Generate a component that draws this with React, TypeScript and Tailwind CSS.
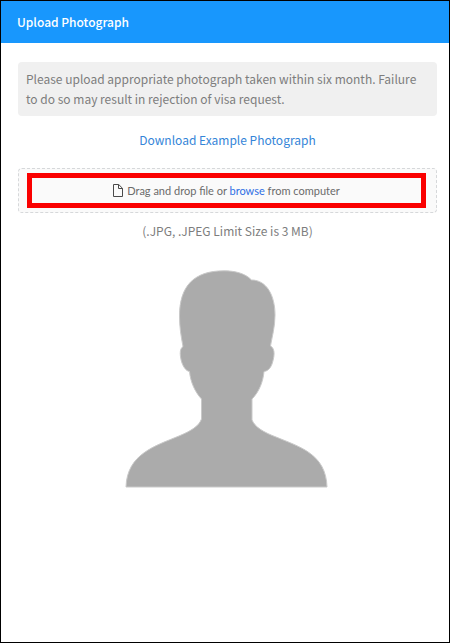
import { useRef, useState } from "react";
import type { ChangeEvent, DragEvent } from "react";

const ACCEPTED_TYPES = ".jpg,.jpeg";

function FileIcon() {
  return (
    <svg
      viewBox="0 0 10 13"
      className="h-[13px] w-[10px] shrink-0"
      fill="none"
      stroke="#4a4a4a"
      aria-hidden="true"
    >
      <path d="M.5.5h5.2l3.8 3.8v8.2h-9z" />
      <path d="M5.5.5v4h4" />
    </svg>
  );
}

function PersonSilhouette() {
  return (
    <svg
      viewBox="0 0 205 219"
      className="h-[219px] w-[205px]"
      fill="#ababab"
      stroke="#c9c9c9"
      role="img"
      aria-label="Photograph placeholder"
    >
      <path d="M99 .8C109 .8 120 3 126.500 10C142 10 150 26 150 45C150 57 147 67 145.500 76C151 79 149 88 147 94C145.500 98 143 101 139 101.500C138 112 134 122 127 129L127 150C130 157 138 162 151 167C175 177 201 184 202 217L1 217C2 184 30 176 54 166C66 161 74 156 76.500 149L76.500 129C70 122 65.500 112 64.500 101.500C61 101 58.500 97 57 93C55 87 54 79 58 76.500C56 66 54.500 57 54.500 46C54.500 16 69 .8 99 .8Z" />
    </svg>
  );
}

function DropZone() {
  const inputRef = useRef<HTMLInputElement>(null);
  const [fileName, setFileName] = useState("");

  const handleChange = (event: ChangeEvent<HTMLInputElement>) => {
    setFileName(event.target.files?.[0]?.name ?? "");
  };

  const handleDrop = (event: DragEvent<HTMLDivElement>) => {
    event.preventDefault();
    setFileName(event.dataTransfer.files[0]?.name ?? "");
  };

  return (
    <div
      className="rounded-sm border border-dashed border-[#d6d8da] bg-[#fafafa] py-1 pr-2.5 pl-2"
      onDragOver={(event) => event.preventDefault()}
      onDrop={handleDrop}
    >
      <div className="flex items-center justify-center gap-1 border-[5px] border-[#fa0000] py-1 font-['Lato',sans-serif] text-[11px] leading-[17px] text-[#6b6b6b]">
        <FileIcon />
        {fileName ? (
          <span>{fileName}</span>
        ) : (
          <p>
            Drag and drop file or{" "}
            <button
              type="button"
              className="cursor-pointer text-[#2f6fe4]"
              onClick={() => inputRef.current?.click()}
            >
              browse
            </button>{" "}
            from computer
          </p>
        )}
        <input
          ref={inputRef}
          type="file"
          accept={ACCEPTED_TYPES}
          aria-label="Photograph"
          className="hidden"
          onChange={handleChange}
        />
      </div>
    </div>
  );
}

export default function App() {
  return (
    <div className="flex min-h-screen flex-col border border-black bg-white font-['Noto_Sans_CJK_SC',sans-serif] text-[12px] leading-5 text-[#7d7d7d]">
      <header className="bg-[#1897fd] px-4 py-[11px]">
        <h1 className="font-medium text-white">Upload Photograph</h1>
      </header>

      <main className="flex flex-col pt-[19px] pr-3 pl-[17px]">
        <p className="rounded bg-[#f0f0f0] px-2 py-[7px]">
          Please upload appropriate photograph taken within six month. Failure
          to do so may result in rejection of visa request.
        </p>
        <a
          href="#example"
          className="mt-3.5 mb-[18px] self-center text-[#3585d8]"
        >
          Download Example Photograph
        </a>
        <DropZone />
        <p className="mt-2 text-center">(.JPG, .JPEG Limit Size is 3 MB)</p>
        <div className="mt-[29px] flex justify-center">
          <PersonSilhouette />
        </div>
      </main>
    </div>
  );
}
